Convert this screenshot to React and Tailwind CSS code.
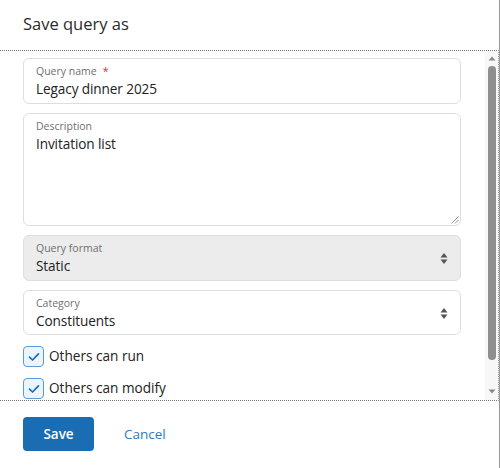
import React from "react";

const font = { fontFamily: '"Open Sans", "Noto Sans", sans-serif' };

function Field({ label, value, required, className = "", children }) {
  return (
    <div className={`relative rounded-[6px] border border-[#dedede] px-[12px] pt-[5px] ${className}`}>
      <div className="text-[10.5px] leading-[14px] text-[#6f6f6f]">
        {label}
        {required && <span className="ml-[6px] text-[#d0312d]">*</span>}
      </div>
      <div className="mt-[1px] text-[13.6px] leading-[19px] tracking-[-0.1px] text-[#222]">{value}</div>
      {children}
    </div>
  );
}

function SelectArrows() {
  return (
    <svg width="8" height="13" viewBox="0 0 8 13" className="absolute right-[12px] top-[16px]">
      <path d="M4 1 L7.5 5.5 L0.5 5.5 Z" fill="#555" />
      <path d="M4 12 L7.5 7.5 L0.5 7.5 Z" fill="#555" />
    </svg>
  );
}

function Check({ label }) {
  return (
    <div className="flex items-center gap-[5px]">
      <div className="flex h-[21px] w-[21px] items-center justify-center rounded-[4px] border border-[#5c9ad6] bg-[#eaf5ff]">
        <svg width="12" height="10" viewBox="0 0 12 10">
          <path d="M1.5 5.2 L4.5 8 L10.5 1.8" fill="none" stroke="#1f6db3" strokeWidth="1.7" strokeLinecap="round" strokeLinejoin="round" />
        </svg>
      </div>
      <span className="text-[13.6px] text-[#222]">{label}</span>
    </div>
  );
}

export default function App() {
  return (
    <div style={font} className="flex h-[468px] w-[500px] flex-col border-r border-[#9a9a9a] bg-white">
      <div className="flex h-[50px] shrink-0 items-center px-[23px] pb-[2px]">
        <h1 className="text-[16.5px] text-[#2b2b2b]">Save query as</h1>
      </div>
      <div className="flex h-[351px] shrink-0 border-y border-dotted border-y-[#777] border-r border-r-[#999]">
        <div className="flex-1 overflow-hidden pl-[23px] pr-[24px] pt-[7px]">
          <div className="flex flex-col">
            <Field label="Query name" value="Legacy dinner 2025" required className="h-[46px]" />
            <Field label="Description" value="Invitation list" className="mt-[9px] h-[113px]">
              <svg width="8" height="8" viewBox="0 0 8 8" className="absolute bottom-[1px] right-[1px]">
                <path d="M7.5 0.5 L0.5 7.5 M7.5 4 L4 7.5" stroke="#888" strokeWidth="0.9" />
              </svg>
            </Field>
            <Field label="Query format" value="Static" className="mt-[9px] h-[46px] bg-[#ececec]">
              <SelectArrows />
            </Field>
            <Field label="Category" value="Constituents" className="mt-[9px] h-[45px]">
              <SelectArrows />
            </Field>
            <div className="mt-[11px]">
              <Check label="Others can run" />
            </div>
            <div className="mt-[11px]">
              <Check label="Others can modify" />
            </div>
          </div>
        </div>
        <div className="flex w-[13px] shrink-0 flex-col items-center bg-[#f7f7f7] pt-[5px] pb-[6px]">
          <svg width="8" height="5" viewBox="0 0 8 5">
            <path d="M4 0.5 L7.5 4.5 L0.5 4.5 Z" fill="#8a8a8a" />
          </svg>
          <div className="mt-[5px] h-[294px] w-[8px] rounded-[4px] bg-[#8f8f8f]" />
          <div className="flex-1" />
          <svg width="8" height="5" viewBox="0 0 8 5">
            <path d="M4 4.5 L7.5 0.5 L0.5 0.5 Z" fill="#8a8a8a" />
          </svg>
        </div>
      </div>
      <div className="flex flex-1 items-start px-[23px] pt-[16px]">
        <button className="h-[34px] w-[71px] rounded-[4px] bg-[#1b6db3] text-[13.5px] font-semibold text-white">
          Save
        </button>
        <button className="ml-[30px] h-[34px] text-[13.5px] text-[#2b7bc4]">Cancel</button>
      </div>
    </div>
  );
}
